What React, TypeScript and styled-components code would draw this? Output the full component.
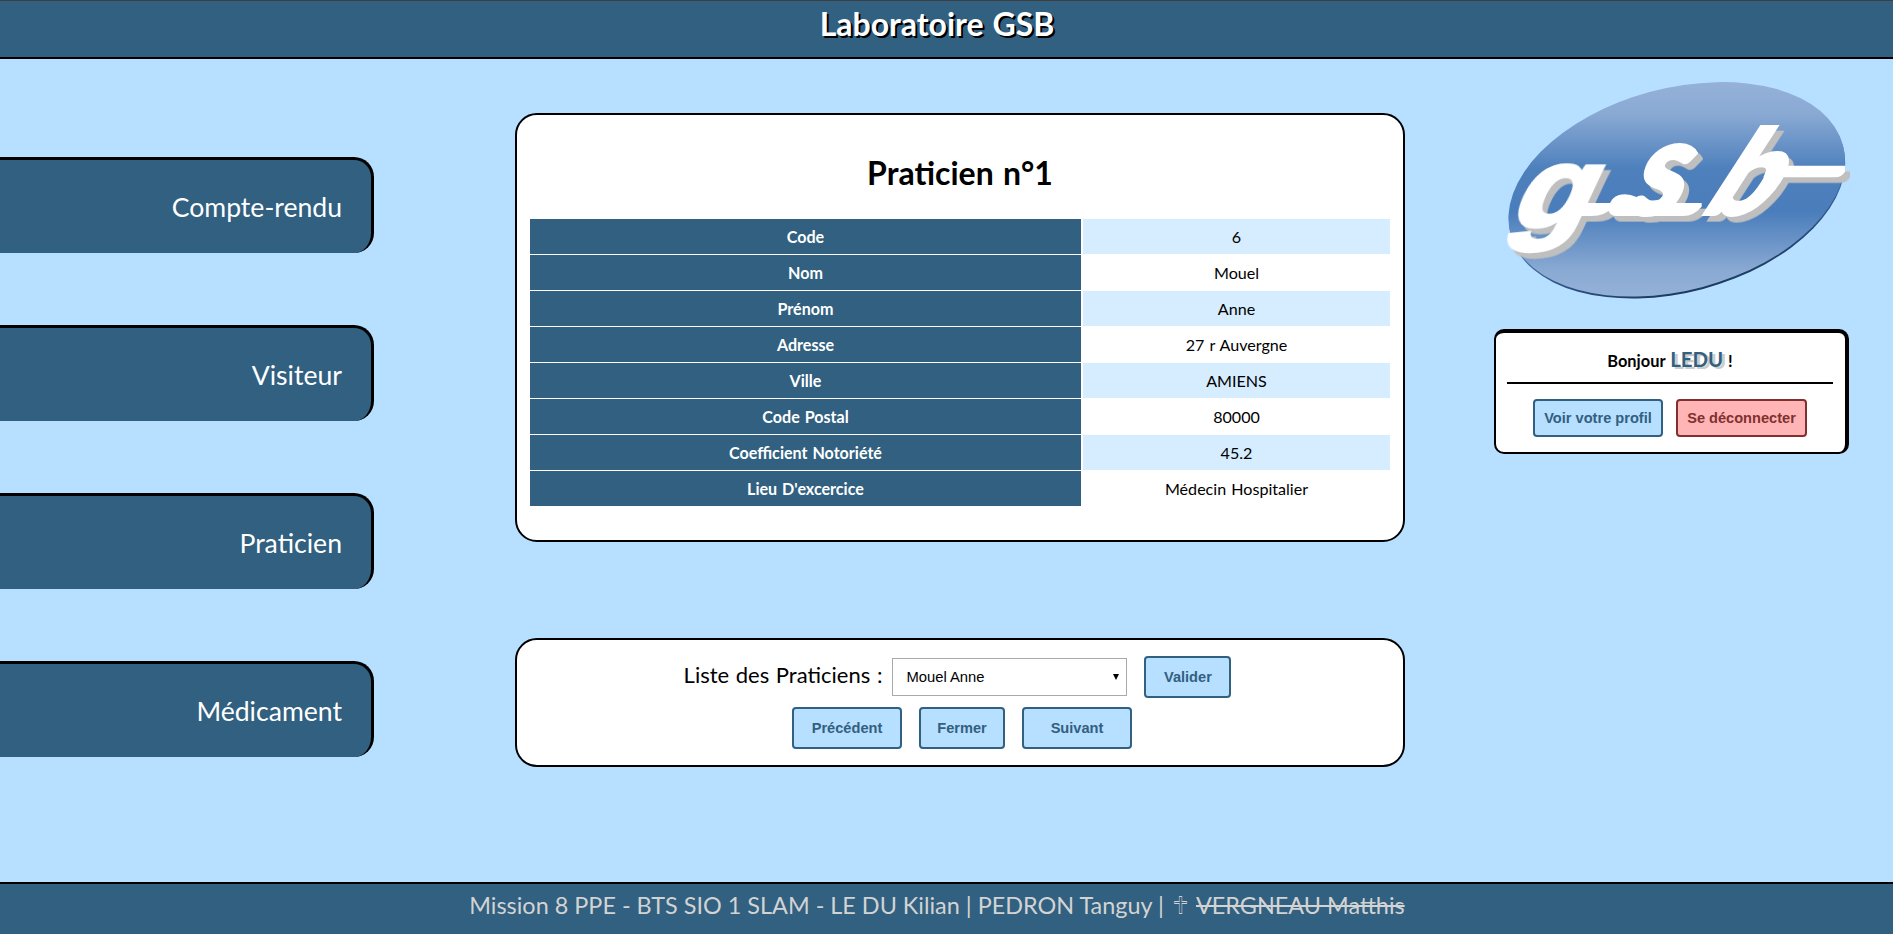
import React from "react";
import styled, { createGlobalStyle, css } from "styled-components";

const navy = "#316080";
const sky = "#b7dfff";

const GlobalStyle = createGlobalStyle`
  * { box-sizing: border-box; }
  body {
    margin: 0;
    background: ${sky};
    font-family: Lato, Calibri, sans-serif;
    color: #000;
  }
`;

const Page = styled.div`
  display: flex;
  flex-direction: column;
  height: 934px;
  overflow: hidden;
`;

const Header = styled.header`
  height: 59px;
  flex: none;
  background: ${navy};
  border-top: 1px solid #3f3f3f;
  border-bottom: 2px solid #000;
  padding: 4px 19px 0 0;
  text-align: center;
`;

const SiteTitle = styled.h1`
  margin: 0;
  font-size: 32px;
  line-height: 38px;
  word-spacing: 1px;
  color: #fff;
  text-shadow: 2px 2px #000;
`;

const Content = styled.div`
  flex: 1;
  display: flex;
  align-items: flex-start;
`;

const Nav = styled.nav`
  width: 374px;
  margin-top: 98px;
  display: flex;
  flex-direction: column;
  gap: 72px;
`;

const NavLink = styled.a`
  height: 96px;
  background: ${navy};
  border-top: 3px solid #000;
  border-right: 3px solid #000;
  border-radius: 0 20px 20px 0;
  padding-right: 29px;
  text-align: right;
  font-size: 26.6px;
  line-height: 95px;
  color: #fff;
`;

const Main = styled.main`
  width: 890px;
  margin: 54px 0 0 141px;
  display: flex;
  flex-direction: column;
  gap: 96px;
`;

const Card = styled.section`
  background: #fff;
  border: 2px solid #000;
  border-radius: 22px;
`;

const RecordCard = styled(Card)`
  height: 429px;
  padding: 38px 13px 0;
`;

const RecordTitle = styled.h2`
  margin: 0 0 26px;
  font-size: 32px;
  line-height: 40px;
  word-spacing: 1.5px;
  text-align: center;
`;

const Table = styled.div`
  display: grid;
  row-gap: 2px;
`;

const Row = styled.div`
  display: grid;
  grid-template-columns: 551px 1fr;
  column-gap: 2px;
  height: 34px;
  line-height: 35px;
  font-size: 16.1px;
  word-spacing: 1px;
  text-align: center;
`;

const Label = styled.div`
  background: ${navy};
  color: #fff;
  font-weight: bold;
`;

const Value = styled.div<{ $shaded: boolean }>`
  background: ${(p) => (p.$shaded ? "#d6edff" : "#fff")};
`;

const PickerCard = styled(Card)`
  height: 129px;
  padding-top: 16px;
  display: flex;
  flex-direction: column;
  gap: 9px;
`;

const PickerRow = styled.div<{ $left?: number; $right?: number }>`
  display: flex;
  align-items: center;
  justify-content: center;
  gap: 17px;
  padding-left: ${(p) => p.$left ?? 0}px;
  padding-right: ${(p) => p.$right ?? 0}px;
`;

const PickerLabel = styled.label`
  font-size: 22px;
  line-height: 30px;
  word-spacing: 1px;
  margin: -4px -7px 0 0;
`;

const Select = styled.div`
  width: 235px;
  height: 38px;
  border: 1px solid #a9a9a9;
  padding: 0 7px 0 13px;
  display: flex;
  align-items: center;
  justify-content: space-between;
  font: 14.8px "Liberation Sans", Arial, sans-serif;
`;

const Caret = styled.svg`
  width: 6px;
  height: 6px;
`;

const tones = {
  blue: css`
    background: ${sky};
    border-color: ${navy};
    color: ${navy};
  `,
  red: css`
    background: #ffb5b5;
    border-color: #80302f;
    color: #80302f;
  `,
};

const Button = styled.button<{ $w: number; $h?: number; $tone?: "blue" | "red" }>`
  width: ${(p) => p.$w}px;
  height: ${(p) => p.$h ?? 42}px;
  padding: 0;
  border: 2px solid;
  border-radius: 4px;
  font: bold 14.6px "Liberation Sans", Arial, sans-serif;
  white-space: nowrap;
  ${(p) => tones[p.$tone ?? "blue"]}
`;

const Aside = styled.aside`
  width: 400px;
  margin: 1px 0 0 75px;
`;

const Logo = styled.svg`
  display: block;
  width: 400px;
  height: 260px;
`;

const Wordmark = styled.g`
  fill: #fff;
  filter: drop-shadow(15px 17px 0 #bfbfbf);
  text {
    font-family: Lato, sans-serif;
    font-weight: 900;
    stroke: #fff;
    stroke-width: 12px;
  }
  text:first-child {
    font-family: "Liberation Sans", Arial, sans-serif;
  }
`;

const ProfileCard = styled.section`
  width: 355px;
  height: 125px;
  margin: 9px 0 0 14px;
  background: #fff;
  border: 2px solid #000;
  border-top-width: 4px;
  border-right-width: 4px;
  border-radius: 10px;
  padding: 0 12px 0 11px;
`;

const Greeting = styled.div`
  height: 51px;
  border-bottom: 2px solid #000;
  text-align: center;
  font-size: 16.4px;
  font-weight: bold;
  line-height: 52px;
  word-spacing: 1px;
`;

const UserName = styled.span`
  font-size: 20.4px;
  color: ${navy};
  text-shadow: 3px 2px #ccc;
`;

const ProfileActions = styled.div`
  display: flex;
  justify-content: center;
  gap: 13px;
  padding-top: 15px;
`;

const Footer = styled.footer`
  height: 52px;
  flex: none;
  background: ${navy};
  border-top: 2px solid #000;
  padding: 5px 19px 0 0;
  text-align: center;
  font-size: 23.42px;
  line-height: 32px;
  color: #d3d3d3;
`;

const Cross = styled.span`
  font-family: "DejaVu Sans", sans-serif;
  font-size: 25px;
  line-height: 1;
  margin: 0 3px;
`;

const sections = ["Compte-rendu", "Visiteur", "Praticien", "Médicament"];

const record: [string, string][] = [
  ["Code", "6"],
  ["Nom", "Mouel"],
  ["Prénom", "Anne"],
  ["Adresse", "27 r Auvergne"],
  ["Ville", "AMIENS"],
  ["Code Postal", "80000"],
  ["Coefficient Notoriété", "45.2"],
  ["Lieu D'excercice", "Médecin Hospitalier"],
];

function GsbLogo() {
  return (
    <Logo viewBox="0 0 1200 780">
      <defs>
        <linearGradient
          id="oval"
          gradientUnits="userSpaceOnUse"
          x1="0"
          y1="67"
          x2="0"
          y2="713"
          gradientTransform="rotate(15 590 388)"
        >
          <stop offset="0" stopColor="#95b1d8" />
          <stop offset="0.15" stopColor="#89a9d3" />
          <stop offset="0.4" stopColor="#4e80bc" />
          <stop offset="0.6" stopColor="#4a7dbb" />
          <stop offset="0.87" stopColor="#89a9d3" />
          <stop offset="1" stopColor="#95b1d8" />
        </linearGradient>
        <linearGradient id="edge" gradientUnits="userSpaceOnUse" x1="590" y1="80" x2="590" y2="700">
          <stop offset="0" stopColor="#7f9fce" />
          <stop offset="0.5" stopColor="#4a7dbb" />
          <stop offset="1" stopColor="#1b3a5f" />
        </linearGradient>
      </defs>
      <ellipse cx="591" cy="393" rx="516" ry="304" fill="url(#edge)" transform="rotate(-15 591 393)" />
      <ellipse cx="590" cy="388" rx="516" ry="303" fill="url(#oval)" transform="rotate(-15 590 388)" />
      <Wordmark>
        <text transform="translate(78 500) skewX(-25) scale(1.1 1)" fontSize="345">g</text>
        <text transform="translate(432 463) skewX(-22) scale(0.88 1)" fontSize="395">s</text>
        <text transform="translate(655 463) skewX(-33) scale(0.95 1)" fontSize="350">b</text>
        <path d="M270 429H400V440Q375 468 335 468H250Z" />
        <path d="M385 450Q390 403 435 403Q470 405 495 429H665V440Q640 468 610 468H410Q390 468 385 450Z" />
        <path d="M865 317H1095V335Q1085 352 1065 352H850Z" />
      </Wordmark>
    </Logo>
  );
}

export default function App() {
  return (
    <Page>
      <GlobalStyle />
      <Header>
        <SiteTitle>Laboratoire GSB</SiteTitle>
      </Header>
      <Content>
        <Nav>
          {sections.map((s) => (
            <NavLink key={s}>{s}</NavLink>
          ))}
        </Nav>
        <Main>
          <RecordCard>
            <RecordTitle>Praticien n°1</RecordTitle>
            <Table>
              {record.map(([label, value], i) => (
                <Row key={label}>
                  <Label>{label}</Label>
                  <Value $shaded={i % 2 === 0}>{value}</Value>
                </Row>
              ))}
            </Table>
          </RecordCard>
          <PickerCard>
            <PickerRow $right={5}>
              <PickerLabel>Liste des Praticiens :</PickerLabel>
              <Select>
                Mouel Anne
                <Caret viewBox="0 0 6 6">
                  <path d="M0 0H6L3 6Z" />
                </Caret>
              </Select>
              <Button $w={87}>Valider</Button>
            </PickerRow>
            <PickerRow $left={4}>
              <Button $w={110}>Précédent</Button>
              <Button $w={86}>Fermer</Button>
              <Button $w={110}>Suivant</Button>
            </PickerRow>
          </PickerCard>
        </Main>
        <Aside>
          <GsbLogo />
          <ProfileCard>
            <Greeting>
              Bonjour <UserName>LEDU</UserName> !
            </Greeting>
            <ProfileActions>
              <Button $w={130} $h={38}>Voir votre profil</Button>
              <Button $w={131} $h={38} $tone="red">Se déconnecter</Button>
            </ProfileActions>
          </ProfileCard>
        </Aside>
      </Content>
      <Footer>
        Mission 8 PPE - BTS SIO 1 SLAM - LE DU Kilian | PEDRON Tanguy | <Cross>🕆</Cross> <s>VERGNEAU Matthis</s>
      </Footer>
    </Page>
  );
}
